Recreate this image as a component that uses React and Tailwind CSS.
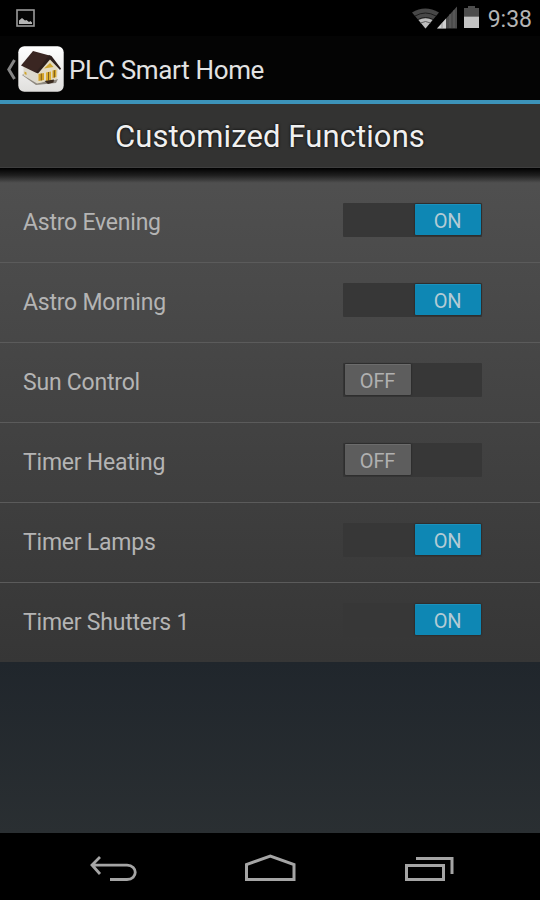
import React, { useState } from 'react';

const initialFunctions = [
  { id: 'astro-evening', name: 'Astro Evening', on: true },
  { id: 'astro-morning', name: 'Astro Morning', on: true },
  { id: 'sun-control', name: 'Sun Control', on: false },
  { id: 'timer-heating', name: 'Timer Heating', on: false },
  { id: 'timer-lamps', name: 'Timer Lamps', on: true },
  { id: 'timer-shutters', name: 'Timer Shutters 1', on: true }
];

const HouseIcon = () => (
  <svg className="mt-[2px] w-[46px] h-[46px]" viewBox="0 0 46 46">
    <defs>
      <linearGradient id="tile" x1="0" y1="0" x2="0" y2="1">
        <stop offset="0" stopColor="#ffffff" />
        <stop offset="1" stopColor="#e0dfdd" />
      </linearGradient>
    </defs>
    <rect x="0.3" y="0.3" width="45.4" height="45.4" rx="6" fill="url(#tile)" />
    {/* ground shadow */}
    <path d="M4 29 L18 39 L38 37 L40 33 L36 34 L19 37 L6 28 Z" fill="#8f8980" />
    {/* walls */}
    <path d="M5.500 20 L19 26 L19 37.500 L5.500 29.500 Z" fill="#dcd8cc" />
    <path d="M19 26 L31 11 L40 23 L39 33 L19 37.500 Z" fill="#e2dac3" />
    {/* roof */}
    <path d="M15 5 L31.500 9.500 L18.500 27 L3 19.500 Z" fill="#3a2622" />
    <path d="M31 9 L33.500 10 L43 22.500 L42 24 L32 13.500 L20 27.500 L18 26.500 Z" fill="#2d1f1c" />
    {/* windows and door */}
    <path d="M26 22.500 L32 17 L35.500 21 Z" fill="#cfa630" />
    <path d="M20.500 28 L26 27 V34 L20.500 35 Z" fill="#d3a225" />
    <path d="M28 26.500 L33 25.500 V34.500 L28 35 Z" fill="#dcae30" />
    <path d="M34.500 24.500 L38.300 23.800 V31 L34.500 32 Z" fill="#d3a225" />
    <path d="M23.300 27.500 V34.500 M30.500 26 V34.500 M36.400 24.200 V31.500" stroke="#6f541c" strokeWidth="0.9" />
    <path d="M6.500 25.500 L8.500 26.500 V29 L6.500 28 Z" fill="#d0a52d" />
    <path d="M26.500 35 L36 33.500 L35.500 36.500 L30 38 Z" fill="#3a2a1e" />
  </svg>
);

const StatusBar = () => (
  <div className="flex h-9 items-center justify-between bg-black pl-4 pr-[8px]">
    <svg className="w-5 h-[19px]" viewBox="0 0 20 19">
      <rect x="1" y="1" width="17" height="16" fill="#050505" stroke="#9a9a9a" strokeWidth="1.600" />
      <path d="M3 15 V11.500 L6 9 L9 11.500 L10.500 11 L13 13 L14.500 12 L16 13.500 V15 Z" fill="#b5b5b5" />
    </svg>
    <div className="flex items-center">
      <svg className="w-[68px] h-6" viewBox="0 0 68 24">
        {/* wifi */}
        <path d="M0 6.500 Q13 -1.500 27 6.500 L13.500 22.500 Z" fill="#474747" />
        <path d="M3 10 Q13.500 4 24 10 M6 13.500 Q13.500 9.500 21 13.500" fill="none" stroke="#1c1c1c" strokeWidth="1" />
        <path d="M6.500 14 Q13.500 10.500 20.500 14 L13.500 22.500 Z" fill="#bdbdbd" />
        <path d="M8.500 17 Q13.500 14 18.500 17" fill="none" stroke="#555" strokeWidth="0.9" />
        {/* signal */}
        <path d="M25 22.500 L45 0.500 V22.500 Z" fill="#4b4b4b" />
        <path d="M25 22.500 L34 12.500 V22.500 Z" fill="#cfcfcf" />
        <path d="M30 17 V22 M38 8 V22 M42 4 V22" stroke="#777" strokeWidth="0.6" />
        {/* battery */}
        <path d="M52 2 H56 V0 H63 V2 H67 V10.500 H52 Z" fill="#4d4d4d" />
        <rect x="52" y="10.500" width="15" height="11.500" fill="#c4c4c4" />
      </svg>
      <span className="ml-[8px] mt-[2px] text-[23px] leading-none text-[#b4b4b4]">9:38</span>
    </div>
  </div>
);

const Toggle = ({ on, onClick }) => (
  <button
    onClick={onClick}
    className={`flex h-[34px] w-[139px] rounded-[1px] bg-[#373737] px-[1.5px] pt-px ${on ? 'justify-end' : 'justify-start'}`}
  >
    <span
      className={`flex h-[31px] w-[66px] items-center justify-center rounded-[1px] pt-[2px] text-[20px] leading-none tracking-[-0.2px] shadow-[0_0_2px_rgba(0,0,0,0.6)] ${
        on ? 'border-t border-[#1b91bd] bg-[#0e87b4] text-[#b3cbd5]' : 'border-t border-[#6c6c6c] bg-[#5d5d5d] text-[#b0b0b0]'
      }`}
    >
      {on ? 'ON' : 'OFF'}
    </span>
  </button>
);

const App = () => {
  const [functions, setFunctions] = useState(initialFunctions);

  const toggle = (id) => {
    setFunctions(functions.map((f) => (f.id === id ? { ...f, on: !f.on } : f)));
  };

  return (
    <div className="flex h-[900px] w-[540px] flex-col overflow-hidden bg-black font-['Roboto',sans-serif]">
      <StatusBar />

      {/* Action bar */}
      <div className="flex h-16 items-center bg-[#040404] pl-[6px]">
        <svg className="mt-[3px] w-3 h-6" viewBox="0 0 12 24">
          <path d="M8.500 2 L2.800 11.500 L8.500 21" fill="none" stroke="#858585" strokeWidth="3" />
        </svg>
        <HouseIcon />
        <h1 className="ml-[5px] mt-[4px] text-[26px] leading-none tracking-[-0.33px] text-[#e2e2e2]">PLC Smart Home</h1>
      </div>
      <div className="h-1 bg-[#3c93b9]" />

      <div className="flex h-[64px] items-center justify-center border-b border-[#3e3e3e] bg-[#333332] pt-px">
        <h2 className="text-[31px] leading-none tracking-[0.1px] text-[#f0f0f0] [text-shadow:0_0_3px_#000]">Customized Functions</h2>
      </div>

      {/* Function list */}
      <div className="bg-linear-to-b from-[#505050] to-[#363636]">
        <div className="h-[15px] bg-linear-to-b from-black via-black/60 to-transparent" />
        {functions.map((f) => (
          <div
            key={f.id}
            className="flex h-20 items-start justify-between border-b border-[#5b5b5b] pl-[23px] pr-[58px] pt-5 last:h-[79px] last:border-b-0"
          >
            <span className="mt-[8px] text-[23px] leading-none tracking-[-0.22px] text-[#b4b4b4]">{f.name}</span>
            <Toggle on={f.on} onClick={() => toggle(f.id)} />
          </div>
        ))}
      </div>

      <div className="flex-1 bg-linear-to-b from-[#20262c] to-[#2a2f32]" />

      {/* Navigation bar */}
      <div className="flex h-[67px] items-start bg-black pl-[88px] pt-[20px]">
        <svg className="w-[50px] h-8" viewBox="0 0 50 32" fill="none" stroke="#a5a5a5" strokeWidth="2.800">
          <path d="M12 4 L4 12 L12 21 M4 12.200 H39 C50 12.200 50 26.500 39 26.500 H22" />
        </svg>
        <svg className="ml-[105px] w-[54px] h-8" viewBox="0 0 54 32" fill="none" stroke="#a5a5a5" strokeWidth="3">
          <path d="M3.500 26.500 V11.500 L27.300 3.200 L51 11.500 V26.500 Z" />
        </svg>
        <svg className="ml-[106px] w-[54px] h-8" viewBox="0 0 54 32" fill="none" stroke="#a5a5a5" strokeWidth="3">
          <path d="M3.500 12.500 H40.500 V26.500 H3.500 Z M13 5.500 H49 V21" />
        </svg>
      </div>
    </div>
  );
};

export default App;
